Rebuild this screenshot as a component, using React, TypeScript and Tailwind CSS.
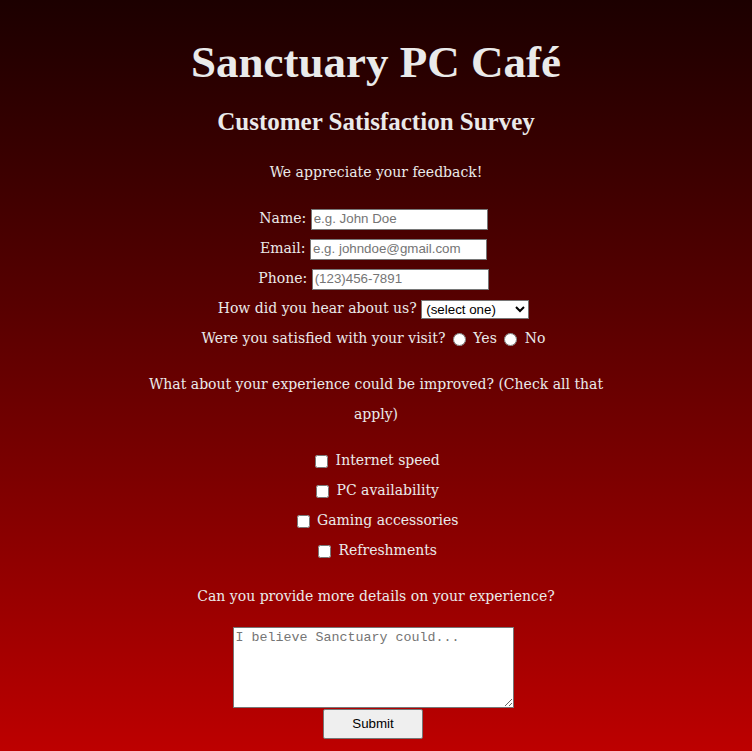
import { useState } from "react";

const improvements = [
  "Internet speed",
  "PC availability",
  "Gaming accessories",
  "Refreshments",
];

const fieldClass =
  "w-[177px] h-[21px] border border-[#767676] bg-white px-[2px] align-middle text-[13.33px] text-black placeholder:text-[#757575] [font-family:'Liberation_Sans',Arial,sans-serif]";

export default function App() {
  const [satisfied, setSatisfied] = useState<string | null>(null);

  return (
    <div className="min-h-[751px] w-full bg-gradient-to-b from-[#1c0000] to-[#bd0000] text-center text-[#eaeaea] [font-family:'DejaVu_Serif',Georgia,serif]">
      <h1 className="pt-[34px] text-[45px] font-bold leading-[56px] [font-family:'Liberation_Serif','Times_New_Roman',serif]">
        Sanctuary PC Café
      </h1>
      <h2 className="mt-[18px] text-[25px] font-bold leading-[28px] [font-family:'Liberation_Serif','Times_New_Roman',serif]">
        Customer Satisfaction Survey
      </h2>

      <form className="text-[14px] leading-[30px]" onSubmit={(e) => e.preventDefault()}>
        <p className="mt-[21px] mb-[16px]">We appreciate your feedback!</p>

        <div className="pr-[5px]">
          <label htmlFor="name">Name: </label>
          <input id="name" type="text" placeholder="e.g. John Doe" className={fieldClass} />
        </div>
        <div className="pr-[5px]">
          <label htmlFor="email">Email: </label>
          <input id="email" type="email" placeholder="e.g. johndoe@gmail.com" className={fieldClass} />
        </div>
        <div className="pr-[5px]">
          <label htmlFor="phone">Phone: </label>
          <input id="phone" type="tel" placeholder="(123)456-7891" className={fieldClass} />
        </div>
        <div className="pr-[5px]">
          <label htmlFor="source">How did you hear about us? </label>
          <select
            id="source"
            className="h-[19px] w-[108px] border border-[#767676] bg-white align-middle text-[13.33px] text-black [font-family:'Liberation_Sans',Arial,sans-serif]"
          >
            <option>(select one)</option>
            <option>Friend</option>
            <option>Social media</option>
            <option>Walked by</option>
          </select>
        </div>
        <div className="pr-[5px]">
          Were you satisfied with your visit?{" "}
          <label>
            <input
              type="radio"
              name="satisfied"
              checked={satisfied === "yes"}
              onChange={() => setSatisfied("yes")}
              className="mx-[3px] align-middle"
            />{" "}
            Yes
          </label>{" "}
          <label>
            <input
              type="radio"
              name="satisfied"
              checked={satisfied === "no"}
              onChange={() => setSatisfied("no")}
              className="mx-[3px] align-middle"
            />{" "}
            No
          </label>
        </div>

        <p className="mx-auto my-[16px] max-w-[470px]">
          What about your experience could be improved? (Check all that apply)
        </p>

        {improvements.map((item) => (
          <div key={item}>
            <label>
              <input type="checkbox" className="mx-[3px] align-middle" /> {item}
            </label>
          </div>
        ))}

        <p className="my-[16px]">Can you provide more details on your experience?</p>

        <div className="flex flex-col items-center pr-[6px]">
          <textarea
            placeholder="I believe Sanctuary could..."
            className="block h-[81px] w-[281px] border border-[#767676] bg-white p-[2px] text-[13.33px] leading-[16px] text-black placeholder:text-[#757575] [font-family:'Liberation_Mono','Courier_New',monospace]"
          />
          <button
            type="submit"
            className="mt-[1px] h-[30px] w-[100px] rounded-[2px] border border-[#767676] bg-[#efefef] text-[13.33px] leading-[28px] text-black [font-family:'Liberation_Sans',Arial,sans-serif]"
          >
            Submit
          </button>
        </div>
      </form>
    </div>
  );
}
